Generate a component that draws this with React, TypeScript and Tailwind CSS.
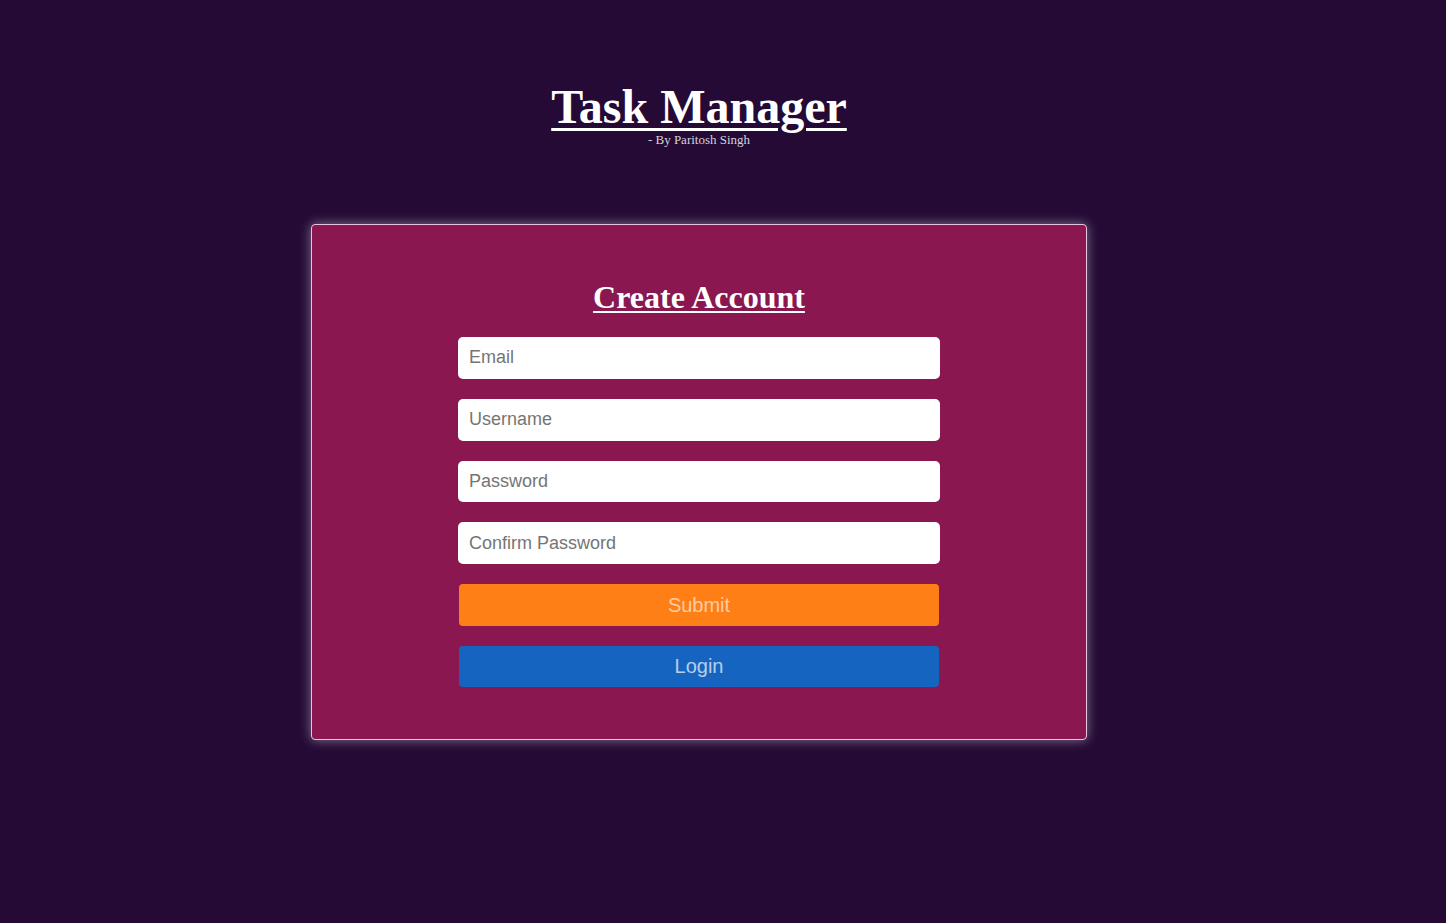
import React from 'react';

const fields = ['Email', 'Username', 'Password', 'Confirm Password'];

export default function App() {
  return (
    <div className="min-h-screen w-full bg-[#240a35]">
      <div className="w-[1398px] flex flex-col items-center pt-[83px]">
        <h1 className="font-['Liberation_Serif',serif] font-bold text-[48px] leading-none text-white underline decoration-[3px] underline-offset-[5px]">
          Task Manager
        </h1>
        <p className="mt-[1px] font-['Liberation_Serif',serif] text-[13px] leading-[15px] text-[#d8d0dc]">
          - By Paritosh Singh
        </p>

        <div className="mt-[77px] w-[776px] h-[516px] bg-[#8a1750] border border-[#e8c4dc] rounded-[4px] shadow-[0_0_12px_rgba(255,255,255,0.45)] flex flex-col items-center pt-[56px]">
          <h2 className="font-['Liberation_Serif',serif] font-bold text-[32px] leading-none text-white underline decoration-2 underline-offset-[3px]">
            Create Account
          </h2>
          <form
            className="mt-[24px] flex flex-col items-center gap-[20px] font-['Liberation_Sans',Arial,sans-serif]"
            onSubmit={(e) => e.preventDefault()}
          >
            {fields.map((f) => (
              <input
                key={f}
                type={f.includes('Password') ? 'password' : 'text'}
                placeholder={f}
                className="w-[482px] h-[41.75px] rounded-[5px] bg-white px-[11px] text-[18px] text-black placeholder:text-[#757575] outline-none"
              />
            ))}
            <button
              type="submit"
              className="w-[480px] h-[41.75px] rounded-[4px] bg-[#ff7f17] text-[20px] text-white/60"
            >
              Submit
            </button>
            <button
              type="button"
              className="w-[480px] h-[41px] rounded-[4px] bg-[#1565c0] text-[20px] text-white/70"
            >
              Login
            </button>
          </form>
        </div>
      </div>
    </div>
  );
}
